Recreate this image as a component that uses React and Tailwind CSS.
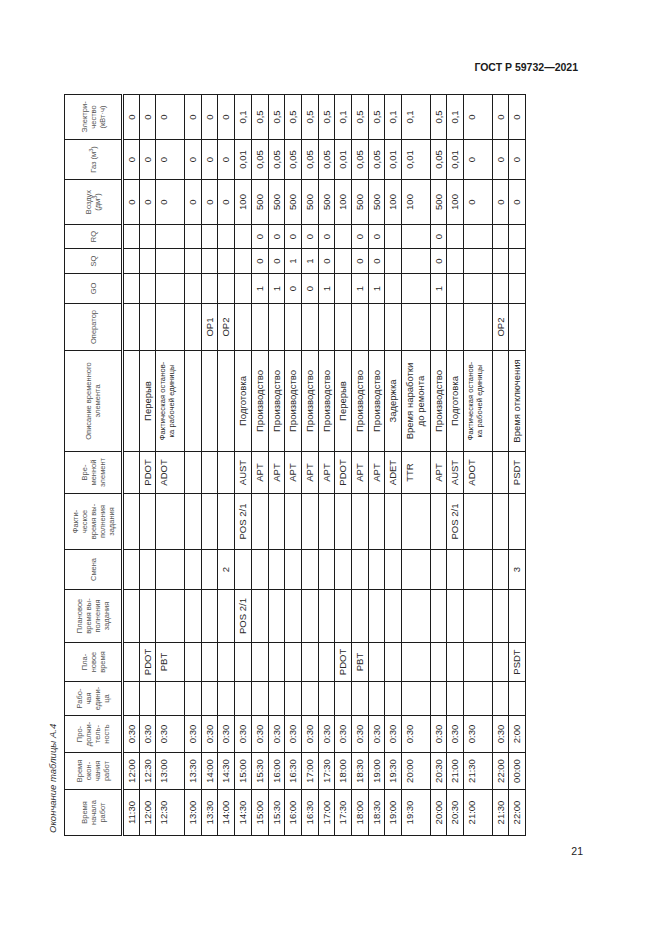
import React from "react";

const FACT = (
  <span className="block text-[7.5px] leading-[9px] tracking-[0.1px]">
    Фактическая останов-
    <br />
    ка рабочей единицы
  </span>
);

const TTR_DESC = (
  <span className="block leading-[11px]">
    Время наработки
    <br />
    до ремонта
  </span>
);

const heads = [
  ["Время", "начала", "работ"],
  ["Время", "окон-", "чания", "работ"],
  ["Про-", "должи-", "тель-", "ность"],
  ["Рабо-", "чая", "едини-", "ца"],
  ["Пла-", "новое", "время"],
  ["Плановое", "время вы-", "полнения", "задания"],
  ["Смена"],
  ["Факти-", "ческое", "время вы-", "полнения", "задания"],
  ["Вре-", "менной", "элемент"],
  ["Описание временного", "элемента"],
  ["Оператор"],
  ["GO"],
  ["SQ"],
  ["RQ"],
  [
    "Воздух",
    <>
      (дм<sup className="text-[5.5px]">3</sup>)
    </>,
  ],
  [
    <>
      Газ (м<sup className="text-[5.5px]">3</sup>)
    </>,
  ],
  ["Электри-", "чество", "(кВт·ч)"],
];

const e = "";
const rows = [
  { c: ["11:30", "12:00", "0:30", e, e, e, e, e, e, e, e, e, e, e, "0", "0", "0"] },
  { c: ["12:00", "12:30", "0:30", e, "PDOT", e, e, e, "PDOT", "Перерыв", e, e, e, e, "0", "0", "0"] },
  { tall: true, c: ["12:30", "13:00", "0:30", e, "PBT", e, e, e, "ADOT", FACT, e, e, e, e, "0", "0", "0"] },
  { c: ["13:00", "13:30", "0:30", e, e, e, e, e, e, e, e, e, e, e, "0", "0", "0"] },
  { c: ["13:30", "14:00", "0:30", e, e, e, e, e, e, e, "OP1", e, e, e, "0", "0", "0"] },
  { c: ["14:00", "14:30", "0:30", e, e, e, "2", e, e, e, "OP2", e, e, e, "0", "0", "0"] },
  { c: ["14:30", "15:00", "0:30", e, e, "POS 2/1", e, "POS 2/1", "AUST", "Подготовка", e, e, e, e, "100", "0,01", "0,1"] },
  { c: ["15:00", "15:30", "0:30", e, e, e, e, e, "APT", "Производство", e, "1", "0", "0", "500", "0,05", "0,5"] },
  { c: ["15:30", "16:00", "0:30", e, e, e, e, e, "APT", "Производство", e, "1", "0", "0", "500", "0,05", "0,5"] },
  { c: ["16:00", "16:30", "0:30", e, e, e, e, e, "APT", "Производство", e, "0", "1", "0", "500", "0,05", "0,5"] },
  { c: ["16:30", "17:00", "0:30", e, e, e, e, e, "APT", "Производство", e, "0", "1", "0", "500", "0,05", "0,5"] },
  { c: ["17:00", "17:30", "0:30", e, e, e, e, e, "APT", "Производство", e, "1", "0", "0", "500", "0,05", "0,5"] },
  { c: ["17:30", "18:00", "0:30", e, "PDOT", e, e, e, "PDOT", "Перерыв", e, e, e, e, "100", "0,01", "0,1"] },
  { c: ["18:00", "18:30", "0:30", e, "PBT", e, e, e, "APT", "Производство", e, "1", "0", "0", "500", "0,05", "0,5"] },
  { c: ["18:30", "19:00", "0:30", e, e, e, e, e, "APT", "Производство", e, "1", "0", "0", "500", "0,05", "0,5"] },
  { c: ["19:00", "19:30", "0:30", e, e, e, e, e, "ADET", "Задержка", e, e, e, e, "100", "0,01", "0,1"] },
  { tall: true, c: ["19:30", "20:00", "0:30", e, e, e, e, e, "TTR", TTR_DESC, e, e, e, e, "100", "0,01", "0,1"] },
  { c: ["20:00", "20:30", "0:30", e, e, e, e, e, "APT", "Производство", e, "1", "0", "0", "500", "0,05", "0,5"] },
  { c: ["20:30", "21:00", "0:30", e, e, e, e, "POS 2/1", "AUST", "Подготовка", e, e, e, e, "100", "0,01", "0,1"] },
  { tall: true, c: ["21:00", "21:30", "0:30", e, e, e, e, e, "ADOT", FACT, e, e, e, e, "0", "0", "0"] },
  { c: ["21:30", "22:00", "0:30", e, e, e, e, e, e, e, "OP2", e, e, e, "0", "0", "0"] },
  { c: ["22:00", "00:00", "2:00", e, "PSDT", e, "3", e, "PSDT", "Время отключения", e, e, e, e, "0", "0", "0"] },
];

const cellCls = "border border-[#1c1c1c] align-top text-center pt-[2px] px-0 leading-[11px] whitespace-nowrap";

export default function App() {
  return (
    <div
      className="w-[661px] h-[935px] bg-white text-[#2a2a2a] overflow-hidden flex flex-col"
      style={{ fontFamily: '"Liberation Sans", Arial, sans-serif' }}
    >
      <div className="h-[95px] pt-[61px] pr-[83px] text-right text-[10.5px] font-bold leading-[13px] text-[#1a1a1a]">
        ГОСТ Р 59732—2021
      </div>

      <div className="ml-[42px] w-[486px] h-[741px] shrink-0">
        <div className="w-[741px] origin-top-left -rotate-90 translate-y-[741px]">
          <div className="h-[22px] flex items-center pl-[3px] italic text-[9.5px] text-[#333]">
            Окончание таблицы А.4
          </div>
          <table className="border-collapse table-fixed w-[741px] text-[9.5px]">
            <colgroup>
              <col className="w-[46px]" />
              <col className="w-[37px]" />
              <col className="w-[37px]" />
              <col className="w-[34px]" />
              <col className="w-[39px]" />
              <col className="w-[53px]" />
              <col className="w-[40px]" />
              <col className="w-[56px]" />
              <col className="w-[42px]" />
              <col className="w-[101px]" />
              <col className="w-[47px]" />
              <col className="w-[30px]" />
              <col className="w-[25px]" />
              <col className="w-[24px]" />
              <col className="w-[45px]" />
              <col className="w-[40px]" />
              <col className="w-[45px]" />
            </colgroup>
            <thead>
              <tr className="h-[58px]">
                {heads.map((lines, i) => (
                  <th
                    key={i}
                    className="border border-[#1c1c1c] border-b-[3px] border-b-[#1c1c1c] border-double align-middle text-center font-normal text-[7.5px] leading-[9px] text-[#555] px-0"
                  >
                    {lines.map((l, j) => (
                      <span key={j} className="block whitespace-nowrap">
                        {l}
                      </span>
                    ))}
                  </th>
                ))}
              </tr>
            </thead>
            <tbody>
              {rows.map((r, i) => (
                <tr key={i} className={r.tall ? "h-[28.7px]" : "h-[16.7px]"}>
                  {r.c.map((v, j) => (
                    <td key={j} className={cellCls}>
                      {v}
                    </td>
                  ))}
                </tr>
              ))}
            </tbody>
          </table>
        </div>
      </div>

      <div className="pt-[9px] pr-[78px] text-right text-[10.5px] leading-[13px] text-[#222]">21</div>
    </div>
  );
}
